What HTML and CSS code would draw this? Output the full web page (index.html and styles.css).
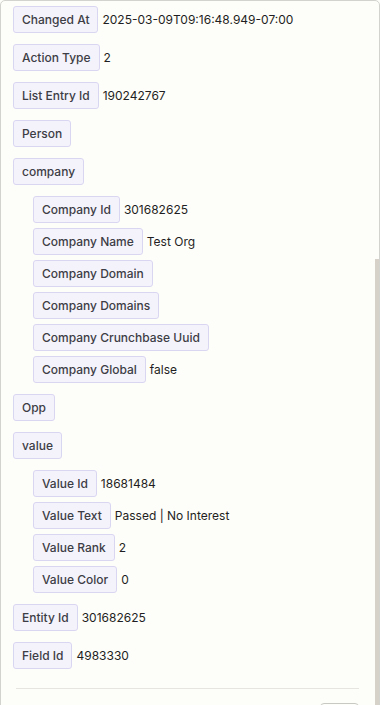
FILE: index.html
```html
<!DOCTYPE html>
<html>
<head>
<meta charset="utf-8">
<link rel="stylesheet" href="styles.css">
</head>
<body>
<div class="panel">
  <div class="list">
    <div class="row"><span class="tag">Changed At</span><span class="val">2025-03-09T09:16:48.949-07:00</span></div>
    <div class="row"><span class="tag">Action Type</span><span class="val">2</span></div>
    <div class="row"><span class="tag">List Entry Id</span><span class="val">190242767</span></div>
    <div class="row"><span class="tag">Person</span></div>
    <div class="group">
      <div class="row"><span class="tag">company</span></div>
      <div class="nested">
        <div class="row"><span class="tag">Company Id</span><span class="val">301682625</span></div>
        <div class="row"><span class="tag">Company Name</span><span class="val">Test Org</span></div>
        <div class="row"><span class="tag">Company Domain</span></div>
        <div class="row"><span class="tag">Company Domains</span></div>
        <div class="row"><span class="tag">Company Crunchbase Uuid</span></div>
        <div class="row"><span class="tag">Company Global</span><span class="val">false</span></div>
      </div>
    </div>
    <div class="row"><span class="tag">Opp</span></div>
    <div class="group">
      <div class="row"><span class="tag">value</span></div>
      <div class="nested">
        <div class="row"><span class="tag">Value Id</span><span class="val">18681484</span></div>
        <div class="row"><span class="tag">Value Text</span><span class="val">Passed | No Interest</span></div>
        <div class="row"><span class="tag">Value Rank</span><span class="val">2</span></div>
        <div class="row"><span class="tag">Value Color</span><span class="val">0</span></div>
      </div>
    </div>
    <div class="row"><span class="tag">Entity Id</span><span class="val">301682625</span></div>
    <div class="row"><span class="tag">Field Id</span><span class="val">4983330</span></div>
  </div>
  <div class="footer">
    <button class="btn" aria-label="Close"></button>
  </div>
  <div class="scrollbar"></div>
</div>
</body>
</html>
```
FILE: styles.css
```css
html, body {
  margin: 0;
  padding: 0;
  background: #fdfdf9;
  overflow: hidden;
}
body {
  font-family: Inter, "Liberation Sans", sans-serif;
  font-size: 12px;
  color: #1f1f23;
}
.panel {
  position: relative;
  box-sizing: border-box;
  width: 380px;
  height: 760px;
  border: 1px solid #d2d2cf;
  border-radius: 5px 5px 0 0;
  background: #fdfdf9;
  overflow: hidden;
}
.list {
  display: flex;
  flex-direction: column;
  gap: 11px;
  padding: 5px 12px 0 12px;
}
.group {
  display: flex;
  flex-direction: column;
  gap: 11px;
}
.nested {
  display: flex;
  flex-direction: column;
  gap: 5px;
  padding-left: 20px;
}
.row {
  display: flex;
  align-items: center;
  gap: 4px;
}
.tag {
  box-sizing: border-box;
  height: 27px;
  display: inline-flex;
  align-items: center;
  padding: 0 8px;
  border: 1px solid #d9d6f2;
  border-radius: 3px;
  background: #f4f3fc;
  color: #3d3d45;
  font-weight: 500;
  line-height: 17px;
}
.val {
  color: #1f1f23;
  line-height: 17px;
}
.footer {
  margin: 19px 20px 0 15px;
  border-top: 1px solid #e6e5df;
  padding-top: 14px;
  display: flex;
  justify-content: flex-end;
}
.btn {
  height: 30px;
  width: 39px;
  padding: 0;
  border: 1px solid #c9c9c4;
  border-radius: 4px;
  background: #fdfdf9;
}
.scrollbar {
  position: absolute;
  right: 0;
  top: 258px;
  width: 4px;
  bottom: 0;
  background: #d6d1c9;
}
```
